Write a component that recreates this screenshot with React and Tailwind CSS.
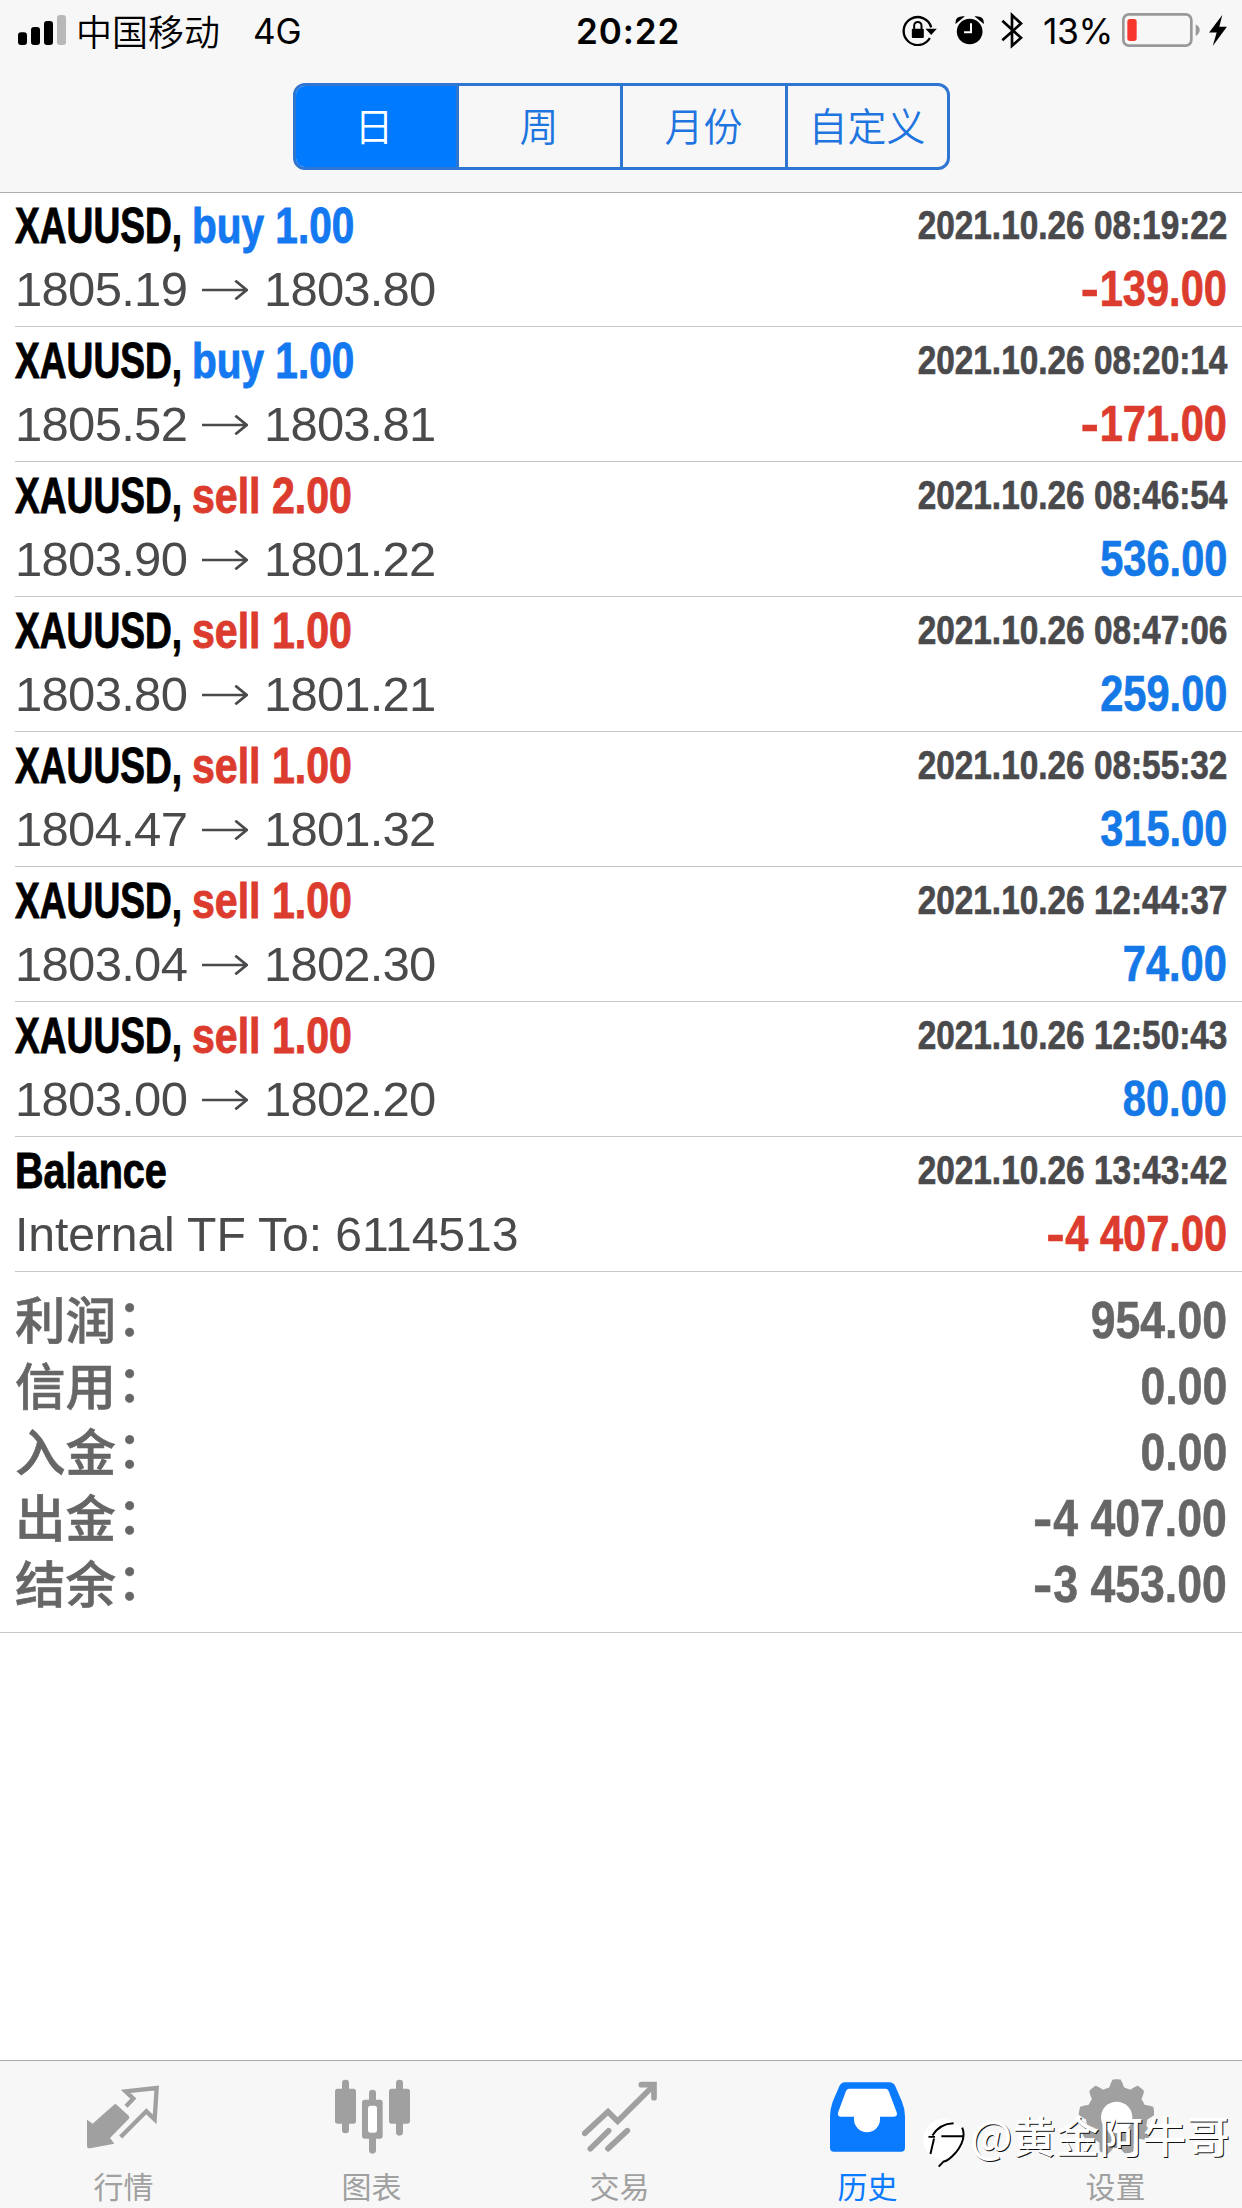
import React, { useState } from 'react';
import clsx from 'clsx';

const DEALS = [
  { side: 'buy', volume: '1.00', open: '1805.19', close: '1803.80', time: '2021.10.26 08:19:22', profit: '-139.00' },
  { side: 'buy', volume: '1.00', open: '1805.52', close: '1803.81', time: '2021.10.26 08:20:14', profit: '-171.00' },
  { side: 'sell', volume: '2.00', open: '1803.90', close: '1801.22', time: '2021.10.26 08:46:54', profit: '536.00' },
  { side: 'sell', volume: '1.00', open: '1803.80', close: '1801.21', time: '2021.10.26 08:47:06', profit: '259.00' },
  { side: 'sell', volume: '1.00', open: '1804.47', close: '1801.32', time: '2021.10.26 08:55:32', profit: '315.00' },
  { side: 'sell', volume: '1.00', open: '1803.04', close: '1802.30', time: '2021.10.26 12:44:37', profit: '74.00' },
  { side: 'sell', volume: '1.00', open: '1803.00', close: '1802.20', time: '2021.10.26 12:50:43', profit: '80.00' },
];

const SUMMARY = [
  { label: '利润', value: '954.00' },
  { label: '信用', value: '0.00' },
  { label: '入金', value: '0.00' },
  { label: '出金', value: '-4 407.00' },
  { label: '结余', value: '-3 453.00' },
];

const PERIODS = ['日', '周', '月份', '自定义'];

// 9-tooth gear outline around (116, 115)
const gearPath = () => {
  const pts = [];
  const n = 180;
  for (let i = 0; i < n; i++) {
    const a = (i / n) * Math.PI * 2;
    const c = Math.cos(a * 9);
    const r = 103 + 11 * Math.max(-1, Math.min(1, c * 1.7));
    pts.push(`${(116 + r * Math.sin(a)).toFixed(1)} ${(115 - r * Math.cos(a)).toFixed(1)}`);
  }
  return `M${pts.join('L')}Z`;
};

const QuotesIcon = () => (
  <svg viewBox="0 0 228 228" className="w-[76px] h-[76px]">
    <path
      d="M3 122L20 134L84 77Q88 73 92 77L128 110Q132 115 128 120L72 177L85 194L12 208Q3 209 3 200Z"
      fill="currentColor"
    />
    <path d="M120 82L142 59L119 37L212 27L206 121L181 97L104 174" fill="none" stroke="currentColor" strokeWidth="13" />
  </svg>
);

const ChartIcon = () => (
  <svg viewBox="0 0 228 228" className="w-[76px] h-[76px]" fill="currentColor">
    <rect x="24" y="2" width="21" height="161" rx="10" />
    <rect x="3" y="29" width="63" height="105" rx="8" />
    <rect x="105" y="32" width="21" height="192" rx="10" />
    <rect x="84" y="62" width="62" height="117" rx="8" />
    <rect x="102" y="80" width="27" height="81" rx="8" fill="#fff" />
    <rect x="186" y="2" width="21" height="168" rx="10" />
    <rect x="165" y="29" width="63" height="105" rx="8" />
  </svg>
);

const TradeIcon = () => (
  <svg viewBox="0 0 228 228" className="w-[76px] h-[76px]" fill="none" stroke="currentColor" strokeWidth="17" strokeLinecap="round">
    <path d="M8 163L78 98L107 127L214 20" />
    <path d="M178 17H216V56" />
    <path d="M25 209L80 155M78 209L136 155" />
  </svg>
);

const HistoryIcon = () => (
  <svg viewBox="0 0 228 228" className="w-[76px] h-[76px]">
    <path
      d="M44 10H178Q190 10 196 22L216 68Q225 90 225 112V206Q225 218 213 218H12Q0 218 0 206V112Q0 90 8 68L28 22Q34 10 44 10Z"
      fill="currentColor"
    />
    <path
      d="M58 29Q51 29 48 36L25 98Q20 113 34 113H72V121A39 39 0 0 0 150 121V113H192Q204 113 200 100L176 36Q173 29 166 29Z"
      fill="#fff"
    />
  </svg>
);

const SettingsIcon = () => (
  <svg viewBox="0 0 228 228" className="w-[76px] h-[76px]">
    <path d={gearPath()} fill="currentColor" />
    <circle cx="116" cy="115" r="47" fill="#fff" />
  </svg>
);

const TABS = [
  { id: 'quotes', label: '行情', Icon: QuotesIcon },
  { id: 'chart', label: '图表', Icon: ChartIcon },
  { id: 'trade', label: '交易', Icon: TradeIcon },
  { id: 'history', label: '历史', Icon: HistoryIcon },
  { id: 'settings', label: '设置', Icon: SettingsIcon },
];

const StatusBar = () => (
  <div className="flex h-[60px] items-center text-[36px] leading-[60px] text-black">
    <div className="flex w-[576px] items-center pl-[18px]">
      <svg viewBox="0 0 144 90" className="w-[48px] h-[30px]">
        <rect x="0" y="52" width="27" height="38" rx="9" />
        <rect x="39" y="36" width="27" height="54" rx="9" />
        <rect x="78" y="18" width="27" height="72" rx="9" />
        <rect x="117" y="0" width="27" height="90" rx="9" fill="#b8b8b8" />
      </svg>
      <span className="ml-[10px] w-[177px] font-['Noto_Sans_CJK_SC',sans-serif] leading-[57px] font-[350]">中国移动</span>
      <span className="pt-[3px] font-['Inter',sans-serif] text-[35px] leading-[57px]">4G</span>
    </div>
    <span className="pt-[3px] font-['Inter',sans-serif] text-[35px] leading-[57px] font-semibold tracking-[0.9px]">20:22</span>
    <div className="ml-auto flex items-center pr-[15px]">
      {/* rotation lock */}
      <svg viewBox="0 0 104 96" className="w-[35px] h-[32px]">
        <path d="M83 72A42 42 0 1 1 87 40" fill="none" stroke="#000" strokeWidth="7" />
        <path d="M70 44H104L87 63Z" />
        <rect x="29" y="44" width="36" height="28" rx="3" />
        <path d="M36 46V35A11 11 0 0 1 58 35V46" fill="none" stroke="#000" strokeWidth="6" />
      </svg>
      {/* alarm */}
      <svg viewBox="0 0 90 88" className="ml-[18px] w-[30px] h-[29px]">
        <circle cx="44" cy="47" r="39" />
        <path d="M3 20Q3 3 24 3ZM85 20Q85 3 64 3Z" stroke="#000" strokeWidth="4" />
        <path d="M48 22V49H27" fill="none" stroke="#fff" strokeWidth="6" />
      </svg>
      {/* bluetooth */}
      <svg viewBox="0 0 66 110" className="ml-[16px] w-[22px] h-[37px]">
        <path d="M4 26L60 77L33 101V9L60 34L4 84" fill="none" stroke="#000" strokeWidth="8" />
      </svg>
      <span className="ml-[20px] w-[79px] pt-[3px] font-['Inter',sans-serif] text-[35.5px] leading-[57px] tracking-[-0.4px]">13%</span>
      {/* battery */}
      <svg viewBox="0 0 234 102" className="w-[78px] h-[34px]">
        <rect x="4" y="4" width="204" height="94" rx="17" fill="none" stroke="#999" strokeWidth="8" />
        <rect x="16" y="18" width="28" height="66" rx="8" fill="#f8372c" />
        <path d="M221 34Q233 41 233 51T221 70Z" fill="#999" />
      </svg>
      <svg viewBox="0 0 54 94" className="ml-[9px] w-[18px] h-[31px]">
        <path d="M40 0L0 53H23L11 94L54 36H31Z" />
      </svg>
    </div>
  </div>
);

const Segmented = ({ value, onChange }) => (
  <div className="mx-auto grid h-[87px] w-[657px] grid-cols-[160px_164px_165px_162px] overflow-hidden rounded-[12px] border-[3px] border-[#2f76d2] bg-[#f7f7f7]">
    {PERIODS.map((p, i) => (
      <button
        key={p}
        onClick={() => onChange(p)}
        className={clsx(
          "pb-[6px] font-['Noto_Sans_CJK_SC',sans-serif] text-[39px] leading-[74px] font-[350]",
          i > 0 && 'border-l-[3px] border-[#2f76d2]',
          value === p ? 'bg-[#007aff] pr-[3px] text-white' : 'text-[#1f75e0]'
        )}
      >
        {p}
      </button>
    ))}
  </div>
);

// amount with a slightly wider minus sign
const Amount = ({ value, className }) => (
  <span className={clsx('origin-right font-bold whitespace-nowrap', className)}>
    {value.startsWith('-') ? (
      <>
        <span className="mr-[1px] inline-block origin-right scale-x-[1.3]">-</span>
        {value.slice(1)}
      </>
    ) : (
      value
    )}
  </span>
);

const Row = ({ title, detail, time, profit }) => (
  <div className="ml-[15px] flex h-[135px] justify-between border-b-[1.5px] border-[#c8c8c8] pr-[15px]">
    <div className="flex flex-col">
      <div className="mt-[7px] flex h-[54px] text-[49.5px] leading-[54px] font-bold [-webkit-text-stroke:0.9px]">{title}</div>
      <div className="mt-[9px] flex h-[54px] items-center text-[49px] leading-[54px] text-[#4a4a4d]">{detail}</div>
    </div>
    <div className="flex flex-col items-end [-webkit-text-stroke:0.7px]">
      <div className="mt-[11px] flex h-[44px]">
        <span className="origin-right scale-x-[0.834] text-[40px] leading-[44px] font-bold whitespace-nowrap text-[#4a4a4d]">
          {time}
        </span>
      </div>
      <div className="mt-[15px] flex h-[54px]">
        <Amount
          value={profit}
          className={clsx(
            'scale-x-[0.84] text-[49.5px] leading-[54px]',
            profit.startsWith('-') ? 'text-[#dc3c2e]' : 'text-[#1478e6]'
          )}
        />
      </div>
    </div>
  </div>
);

const Deal = ({ side, volume, open, close, time, profit }) => (
  <Row
    title={
      <>
        <span className="w-[177px] origin-left scale-x-[0.75] whitespace-nowrap text-black">XAUUSD,</span>
        <span
          className={clsx(
            'origin-left whitespace-nowrap',
            side === 'buy' ? 'scale-x-[0.819] text-[#1478f0]' : 'scale-x-[0.83] text-[#dc3c2e]'
          )}
        >
          {side} {volume}
        </span>
      </>
    }
    detail={
      <>
        <span className="w-[187px] tracking-[-0.7px]">{open}</span>
        <svg viewBox="0 0 138 60" className="mt-[1px] w-[46px] h-[20px]">
          <path d="M0 30H133M100 2L134 30L100 58" fill="none" stroke="#4a4a4d" strokeWidth="8" />
        </svg>
        <span className="ml-[16px] tracking-[-0.8px]">{close}</span>
      </>
    }
    time={time}
    profit={profit}
  />
);

const App = () => {
  const [period, setPeriod] = useState('日');
  const [tab, setTab] = useState('history');

  return (
    <div className="relative flex h-[2208px] w-[1242px] flex-col overflow-hidden bg-white font-['Liberation_Sans','Noto_Sans_CJK_SC',sans-serif]">
      <header className="h-[193px] border-b border-[#adadad] bg-[#f7f7f7]">
        <StatusBar />
        <div className="pt-[23px]">
          <Segmented value={period} onChange={setPeriod} />
        </div>
      </header>

      <main className="-mt-px flex-1">
        {DEALS.map((d) => (
          <Deal key={d.time} {...d} />
        ))}
        <Row
          title={<span className="origin-left scale-x-[0.8] text-black">Balance</span>}
          detail={<span className="origin-left scale-x-[0.982] tracking-[-0.1px] whitespace-nowrap">Internal TF To: 6114513</span>}
          time="2021.10.26 13:43:42"
          profit="-4 407.00"
        />

        <div className="h-[361px] border-b-[1.5px] border-[#c8c8c8] pt-[15px] pr-[15px] pl-[15px] text-[#666]">
          {SUMMARY.map(({ label, value }) => (
            <div key={label} className="flex h-[66px] items-center justify-between [-webkit-text-stroke:0.6px]">
              <span className="-mt-[6px] flex items-center font-['Noto_Sans_CJK_SC',sans-serif] text-[50.5px] leading-[54px] font-medium">
                {label}
                <span className="-mt-[6px] ml-px">：</span>
              </span>
              <Amount value={value} className="scale-x-[0.857] text-[52px] leading-[60px]" />
            </div>
          ))}
        </div>
      </main>

      <nav className="h-[148px] border-t border-[#adadad] bg-[#f7f7f7] text-[#a0a0a0]">
        <div className="flex w-[1240px] pt-[18px]">
          {TABS.map(({ id, label, Icon }) => (
            <button
              key={id}
              onClick={() => setTab(id)}
              className={clsx('flex flex-1 flex-col items-center', tab === id && 'text-[#0a7aff]')}
            >
              <Icon />
              <span className="mt-[15px] -ml-px font-['Noto_Sans_CJK_SC',sans-serif] text-[30px] leading-[30px]">{label}</span>
            </button>
          ))}
        </div>
      </nav>

      {/* watermark */}
      <div className="pointer-events-none absolute top-[2114px] left-[923px] flex items-start">
        <svg viewBox="0 0 132 160" className="mt-[3px] w-[44px] h-[53px]">
          <circle cx="62" cy="68" r="62" fill="#fff" />
          <path
            d="M16 60H36M28 56Q50 20 92 19M55 58H120M33 65L22 112M118 32Q132 66 98 108Q75 134 62 134L47 150"
            fill="none"
            stroke="#000"
            strokeWidth="6"
          />
        </svg>
        <span className="ml-[3px] font-['Noto_Sans_CJK_SC',sans-serif] text-[43.5px] leading-[42px] font-medium whitespace-nowrap text-white [text-shadow:1px_1px_0_#111]">
          @黄金阿牛哥
        </span>
      </div>
    </div>
  );
};

export default App;
